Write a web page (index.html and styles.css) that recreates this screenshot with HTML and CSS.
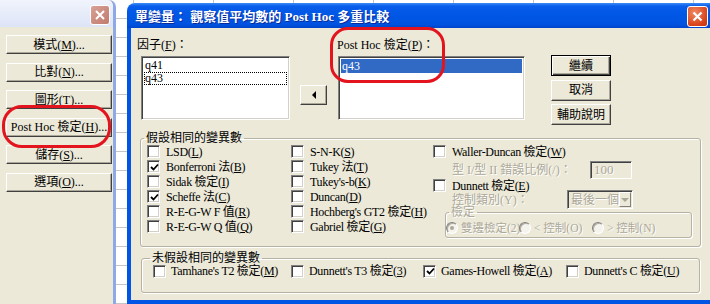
FILE: index.html
```html
<!DOCTYPE html>
<html lang="zh-Hant">
<head>
    <meta charset="UTF-8">
    <title>Post Hoc 多重比較</title>
    <link rel="stylesheet" href="styles.css">
</head>
<body>
<!-- 後面的主對話框 -->
<div class="win win-back">
    <div class="win-title">
        <span class="x-btn x-inactive">
            <svg width="12" height="12" viewBox="0 0 12 12"><path d="M2 2 L10 10 M10 2 L2 10" stroke="#fff" stroke-width="2"/></svg>
        </span>
    </div>
    <div class="side-btns">
        <button class="btn side-btn">模式(<u>M</u>)...</button>
        <button class="btn side-btn">比對(<u>N</u>)...</button>
        <button class="btn side-btn">圖形(<u>T</u>)...</button>
        <button class="btn side-btn">Post Hoc 檢定(<u>H</u>)...</button>
        <button class="btn side-btn">儲存(<u>S</u>)...</button>
        <button class="btn side-btn">選項(<u>O</u>)...</button>
    </div>
</div>

<!-- Post Hoc 對話框 -->
<div class="win dlg">
    <div class="dlg-title">
        <span class="dlg-caption">單變量： 觀察值平均數的 Post Hoc 多重比較</span>
        <span class="x-btn x-active">
            <svg width="13" height="13" viewBox="0 0 13 13"><path d="M2.5 2.5 L10.5 10.5 M10.5 2.5 L2.5 10.5" stroke="#fff" stroke-width="2.2"/></svg>
        </span>
    </div>
    <div class="dlg-body">
        <div class="top-row">
            <div class="col-factor">
                <div class="lbl">因子(<u>F</u>)：</div>
                <div class="listbox lb-factor">
                    <div class="item">q41</div>
                    <div class="item focus">q43</div>
                </div>
            </div>
            <button class="btn arrow-btn"><span class="tri-left"></span></button>
            <div class="col-post">
                <div class="lbl">Post Hoc 檢定(<u>P</u>)：</div>
                <div class="listbox lb-post">
                    <div class="item selected">q43</div>
                </div>
            </div>
            <div class="btn-col">
                <button class="btn cmd-btn default">繼續</button>
                <button class="btn cmd-btn">取消</button>
                <button class="btn cmd-btn">輔助說明</button>
            </div>
        </div>

        <fieldset class="grp grp-eq">
            <legend>假設相同的變異數</legend>
            <div class="eq-cols">
                <div class="cb-col">
                    <div class="cb-row"><span class="cb"></span><span>LSD(<u>L</u>)</span></div>
                    <div class="cb-row"><span class="cb on"><svg width="9" height="9" viewBox="0 0 9 9"><path d="M1 4 L3.5 6.5 L8 1.5" fill="none" stroke="#000" stroke-width="1.8"/></svg></span><span>Bonferroni 法(<u>B</u>)</span></div>
                    <div class="cb-row"><span class="cb"></span><span>Sidak 檢定(<u>I</u>)</span></div>
                    <div class="cb-row"><span class="cb on"><svg width="9" height="9" viewBox="0 0 9 9"><path d="M1 4 L3.5 6.5 L8 1.5" fill="none" stroke="#000" stroke-width="1.8"/></svg></span><span>Scheffe 法(<u>C</u>)</span></div>
                    <div class="cb-row"><span class="cb"></span><span>R-E-G-W F 值(<u>R</u>)</span></div>
                    <div class="cb-row"><span class="cb"></span><span>R-E-G-W Q 值(<u>Q</u>)</span></div>
                </div>
                <div class="cb-col">
                    <div class="cb-row"><span class="cb"></span><span>S-N-K(<u>S</u>)</span></div>
                    <div class="cb-row"><span class="cb"></span><span>Tukey 法(<u>T</u>)</span></div>
                    <div class="cb-row"><span class="cb"></span><span>Tukey's-b(<u>K</u>)</span></div>
                    <div class="cb-row"><span class="cb"></span><span>Duncan(<u>D</u>)</span></div>
                    <div class="cb-row"><span class="cb"></span><span>Hochberg's GT2 檢定(<u>H</u>)</span></div>
                    <div class="cb-row"><span class="cb"></span><span>Gabriel 檢定(<u>G</u>)</span></div>
                </div>
                <div class="col3">
                    <div class="cb-row"><span class="cb"></span><span>Waller-Duncan 檢定(<u>W</u>)</span></div>
                    <div class="sub-row row-ratio">
                        <span class="sub-lbl off">型 I/型 II 錯誤比例(/)：</span>
                        <span class="edit off">100</span>
                    </div>
                    <div class="cb-row row-dunnett"><span class="cb"></span><span>Dunnett 檢定(<u>E</u>)</span></div>
                    <div class="sub-row row-ctrl">
                        <span class="sub-lbl ctrl-lbl off">控制類別(Y)：</span>
                        <span class="combo off">最後一個<span class="combo-btn"><span class="tri-down"></span></span></span>
                    </div>
                    <fieldset class="grp grp-test">
                        <legend class="off">檢定</legend>
                        <div class="radio-row">
                            <span class="rd-item off"><span class="rd on"></span><span>雙邊檢定(2)</span></span>
                            <span class="rd-item off"><span class="rd"></span><span>&lt; 控制(O)</span></span>
                            <span class="rd-item off"><span class="rd"></span><span>&gt; 控制(N)</span></span>
                        </div>
                    </fieldset>
                </div>
            </div>
        </fieldset>

        <fieldset class="grp grp-neq">
            <legend>未假設相同的變異數</legend>
            <div class="neq-row">
                <div class="cb-row"><span class="cb"></span><span>Tamhane's T2 檢定(<u>M</u>)</span></div>
                <div class="cb-row"><span class="cb"></span><span>Dunnett's T3 檢定(<u>3</u>)</span></div>
                <div class="cb-row"><span class="cb on"><svg width="9" height="9" viewBox="0 0 9 9"><path d="M1 4 L3.5 6.5 L8 1.5" fill="none" stroke="#000" stroke-width="1.8"/></svg></span><span>Games-Howell 檢定(<u>A</u>)</span></div>
                <div class="cb-row"><span class="cb"></span><span>Dunnett's C 檢定(<u>U</u>)</span></div>
            </div>
        </fieldset>
    </div>
</div>

<!-- 紅色標註框 -->
<div class="mark mark-side"></div>
<div class="mark mark-post"></div>
</body>
</html>
```

FILE: styles.css
```css
body {
    margin: 0;
    width: 710px;
    height: 304px;
    overflow: hidden;
    position: relative;
    font-family: 'Liberation Serif', 'Noto Sans CJK TC', serif;
    font-size: 12px;
    line-height: 14px;
    color: #000;
    background-color: #fff;
    background-image:
        repeating-linear-gradient(to right, transparent 0 53px, #c6c6c6 53px 54px, transparent 54px 80px),
        repeating-linear-gradient(to bottom, transparent 0 18px, #c6c6c6 18px 19px, transparent 19px 18.2px);
}
u {
    text-decoration: underline;
}
button {
    font: inherit;
    color: #000;
    padding: 0;
    margin: 0;
}
.win {
    position: absolute;
    box-sizing: border-box;
}
/* 後面視窗 */
.win-back {
    left: 0;
    top: 0;
    width: 116px;
    height: 304px;
    background: #ECE9D8;
    border-right: 3px solid #8FA9E6;
    border-top-right-radius: 7px;
}
.win-title {
    height: 27px;
    display: flex;
    justify-content: flex-end;
    align-items: flex-start;
    padding: 5px 3px 0 0;
    box-sizing: border-box;
    background: linear-gradient(#F1F4FC, #DCE4F7);
    border-top-right-radius: 6px;
}
.x-btn {
    width: 21px;
    height: 21px;
    box-sizing: border-box;
    border: 1px solid #fff;
    border-radius: 3px;
    display: flex;
    align-items: center;
    justify-content: center;
}
.x-inactive {
    width: 20px;
    height: 20px;
    background: linear-gradient(135deg, #D9A196, #C07B6E);
}
.x-active {
    background: radial-gradient(circle at 35% 30%, #F08A62, #D8421B 70%, #C23510);
}
.side-btns {
    display: flex;
    flex-direction: column;
    gap: 8.6px;
    padding: 8px 0 0 6px;
}
.btn {
    background: #ECE9D8;
    border: 1px solid;
    border-color: #fff #404040 #404040 #fff;
    box-shadow: inset -1px -1px #ACA899;
    box-sizing: border-box;
    line-height: 14px;
}
.side-btn {
    width: 106px;
    height: 19px;
    font-size: 12px;
    white-space: nowrap;
}
/* 對話框 */
.dlg {
    left: 127px;
    top: 3px;
    width: 590px;
    height: 301px;
    display: flex;
    flex-direction: column;
}
.dlg-title {
    height: 25px;
    flex: none;
    display: flex;
    align-items: center;
    justify-content: space-between;
    padding: 2px 9px 0 8px;
    box-sizing: border-box;
    border-radius: 8px 8px 0 0;
    background: linear-gradient(#3D8DF5 0, #0A5EEB 3px, #0157E6 40%, #0053E0 85%, #0045CB 100%);
}
.dlg-caption {
    color: #fff;
    font-weight: bold;
    font-size: 13px;
    text-shadow: 1px 1px #0A2A9A;
    white-space: nowrap;
}
.dlg-body {
    flex: 1;
    background: #ECE9D8;
    border: 4px solid #0055E5;
    border-top: 0;
}
.top-row {
    display: flex;
    align-items: flex-start;
    padding: 10px 0 0 6px;
}
.lbl {
    height: 14px;
    white-space: nowrap;
}
.col-factor {
    width: 153px;
}
.listbox {
    height: 64px;
    margin-top: 4px;
    background: #fff;
    box-sizing: border-box;
    border: 1px solid;
    border-color: #808080 #fff #fff #808080;
    box-shadow: inset 1px 1px #404040, inset -1px -1px #D4D0C8;
    padding: 2px;
}
.lb-factor {
    width: 149px;
    margin-left: 4px;
}
.item {
    font-size: 12px;
    line-height: 13px;
    height: 13px;
    padding-left: 1px;
}
.item.focus {
    outline: 1px dotted #000;
    outline-offset: -1px;
}
.item.selected {
    background: #316AC5;
    color: #fff;
    height: 14px;
    line-height: 14px;
}
.arrow-btn {
    width: 27px;
    height: 20px;
    margin: 47px 0 0 10px;
    display: flex;
    align-items: center;
    justify-content: center;
}
.tri-left {
    width: 0;
    height: 0;
    border-top: 4px solid transparent;
    border-bottom: 4px solid transparent;
    border-right: 4px solid #000;
}
.col-post {
    width: 188px;
    margin-left: 10px;
}
.lb-post {
    width: 187px;
    margin-left: 1px;
}
.btn-col {
    display: flex;
    flex-direction: column;
    gap: 3.5px;
    margin: 17px 0 0 26px;
}
.cmd-btn {
    width: 60px;
    height: 21px;
    font-size: 12px;
}
.cmd-btn.default {
    border: 1px solid #000;
    box-shadow: inset 1px 1px #fff, inset -1px -1px #404040, inset -2px -2px #ACA899;
}
/* 群組框 */
.grp {
    margin: 0;
    border: 1px solid #B5B2A3;
    border-radius: 3px;
    box-shadow: inset 1px 1px #fff, 1px 1px #fff;
    box-sizing: border-box;
    min-inline-size: 0;
}
.grp legend {
    padding: 0 2px;
    margin-left: -3px;
    line-height: 14px;
    height: 14px;
    font-size: 12px;
}
.grp-eq {
    width: 561px;
    margin: 6px 0 0 9px;
    padding: 0 0 8px 6px;
}
.eq-cols {
    display: grid;
    grid-template-columns: 144px 142px 1fr;
    margin-top: -1px;
}
.cb-row {
    display: flex;
    align-items: center;
    gap: 6px;
    height: 15px;
    white-space: nowrap;
}
.cb-row > span:last-child {
    letter-spacing: -0.3px;
}
.cb {
    flex: none;
    width: 13px;
    height: 13px;
    box-sizing: border-box;
    background: #fff;
    border: 1px solid;
    border-color: #808080 #fff #fff #808080;
    box-shadow: inset 1px 1px #404040, inset -1px -1px #D4D0C8;
    display: flex;
    align-items: center;
    justify-content: center;
}
.cb svg {
    margin: 1px 0 0 1px;
}
.off {
    color: #ACA899;
    text-shadow: 1px 1px #fff;
}
.sub-row {
    display: flex;
    align-items: center;
    padding-left: 19px;
    white-space: nowrap;
}
.row-ratio {
    height: 18px;
    margin-top: 2px;
}
.sub-lbl {
    width: 138px;
}
.ctrl-lbl {
    width: 115px;
}
.edit {
    width: 42px;
    height: 18px;
    box-sizing: border-box;
    border: 1px solid;
    border-color: #808080 #fff #fff #808080;
    box-shadow: inset 1px 1px #404040;
    padding: 1px 0 0 3px;
    font-size: 13px;
}
.row-dunnett {
    height: 13px;
}
.row-ctrl {
    height: 19px;
    margin-top: -2px;
}
.combo {
    width: 66px;
    height: 19px;
    box-sizing: border-box;
    border: 1px solid;
    border-color: #808080 #fff #fff #808080;
    box-shadow: inset 1px 1px #404040;
    display: flex;
    align-items: center;
    justify-content: space-between;
    padding: 0 1px 0 3px;
}
.combo-btn {
    width: 15px;
    height: 15px;
    box-sizing: border-box;
    background: #ECE9D8;
    border: 1px solid;
    border-color: #fff #808080 #808080 #fff;
    display: flex;
    align-items: center;
    justify-content: center;
}
.tri-down {
    width: 0;
    height: 0;
    border-left: 4px solid transparent;
    border-right: 4px solid transparent;
    border-top: 4px solid #ACA899;
}
.grp-test {
    width: 247px;
    margin: -3px 0 0 12px;
    padding: 3px 0 2px 0;
}
.grp-test legend {
    line-height: 12px;
    height: 12px;
    margin-left: 3px;
}
.radio-row {
    display: grid;
    grid-template-columns: 73px 73px 1fr;
    height: 14px;
    align-items: center;
}
.rd-item {
    display: flex;
    align-items: center;
    gap: 3px;
    font-size: 11.5px;
    white-space: nowrap;
}
.rd {
    flex: none;
    width: 12px;
    height: 12px;
    box-sizing: border-box;
    border-radius: 50%;
    background: #F4F3EE;
    border: 1px solid;
    border-color: #808080 #fff #fff #808080;
    box-shadow: inset 1px 1px #B0AD9E;
    display: flex;
    align-items: center;
    justify-content: center;
}
.rd.on::after {
    content: '';
    width: 4px;
    height: 4px;
    border-radius: 50%;
    background: #ACA899;
}
.grp-neq {
    width: 559px;
    margin: 4px 0 0 10px;
    padding: 0 0 14px 11px;
}
.neq-row {
    display: grid;
    grid-template-columns: 138px 132px 143px 1fr;
    margin-top: -1px;
}
.neq-row .cb-row {
    gap: 5px;
    height: 14px;
}
/* 紅色標註 */
.mark {
    position: absolute;
    box-sizing: border-box;
    border: 3px solid #E3141E;
    border-radius: 20px;
}
.mark-side {
    left: 2px;
    top: 105px;
    width: 109px;
    height: 43px;
}
.mark-post {
    left: 330px;
    top: 27px;
    width: 115px;
    height: 56px;
    border-radius: 18px;
}
```
